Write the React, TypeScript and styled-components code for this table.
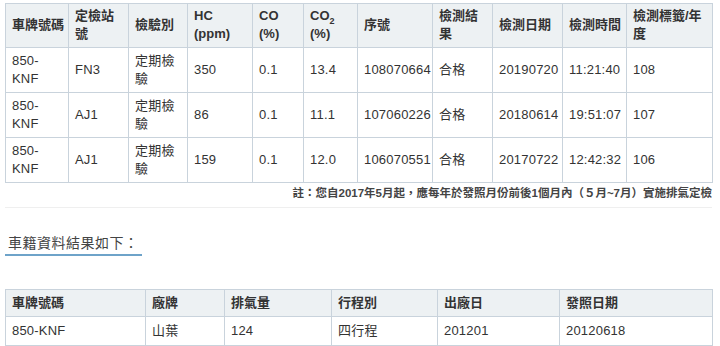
import styled, { createGlobalStyle } from 'styled-components'

const GlobalStyle = createGlobalStyle`
  body {
    margin: 0;
    background: #fff;
    font-family: "Liberation Sans", Arial, "Noto Sans CJK TC", sans-serif;
    color: #333;
  }
`

const inspections = [
  { plate: '850-KNF', station: 'FN3', kind: '定期檢驗', hc: '350', co: '0.1', co2: '13.4', serial: '108070664', result: '合格', date: '20190720', time: '11:21:40', label: '108' },
  { plate: '850-KNF', station: 'AJ1', kind: '定期檢驗', hc: '86', co: '0.1', co2: '11.1', serial: '107060226', result: '合格', date: '20180614', time: '19:51:07', label: '107' },
  { plate: '850-KNF', station: 'AJ1', kind: '定期檢驗', hc: '159', co: '0.1', co2: '12.0', serial: '106070551', result: '合格', date: '20170722', time: '12:42:32', label: '106' },
]

const inspectionCols = [63, 60, 59, 65, 51, 54, 75, 60, 70, 64, 86]
const vehicleCols = [140, 79, 107, 106, 122, 153]

function App() {
  return (
    <Wrapper>
      <GlobalStyle />
      <DataTable>
        <colgroup>
          {inspectionCols.map((w, i) => <Col key={i} $w={w} />)}
        </colgroup>
        <thead>
          <tr>
            <Th>車牌號碼</Th>
            <Th>定檢站號</Th>
            <Th>檢驗別</Th>
            <Th>HC (ppm)</Th>
            <Th>CO (%)</Th>
            <Th>CO<sub>2</sub> (%)</Th>
            <Th>序號</Th>
            <Th>檢測結果</Th>
            <Th>檢測日期</Th>
            <Th>檢測時間</Th>
            <Th>檢測標籤/年度</Th>
          </tr>
        </thead>
        <tbody>
          {inspections.map((r) => (
            <tr key={r.serial}>
              <Td>{r.plate}</Td>
              <Td>{r.station}</Td>
              <Td>{r.kind}</Td>
              <Td>{r.hc}</Td>
              <Td>{r.co}</Td>
              <Td>{r.co2}</Td>
              <Td>{r.serial}</Td>
              <Td>{r.result}</Td>
              <Td>{r.date}</Td>
              <Td>{r.time}</Td>
              <Td>{r.label}</Td>
            </tr>
          ))}
        </tbody>
      </DataTable>

      <Note>註：您自2017年5月起，應每年於發照月份前後1個月內（５月~7月）實施排氣定檢</Note>

      <SectionTitle>車籍資料結果如下：</SectionTitle>

      <DataTable $compact>
        <colgroup>
          {vehicleCols.map((w, i) => <Col key={i} $w={w} />)}
        </colgroup>
        <thead>
          <tr>
            <Th $compact>車牌號碼</Th>
            <Th $compact>廠牌</Th>
            <Th $compact>排氣量</Th>
            <Th $compact>行程別</Th>
            <Th $compact>出廠日</Th>
            <Th $compact>發照日期</Th>
          </tr>
        </thead>
        <tbody>
          <tr>
            <Td $compact>850-KNF</Td>
            <Td $compact>山葉</Td>
            <Td $compact>124</Td>
            <Td $compact>四行程</Td>
            <Td $compact>201201</Td>
            <Td $compact>20120618</Td>
          </tr>
        </tbody>
      </DataTable>
    </Wrapper>
  )
}

const Wrapper = styled.div`
  width: 707px;
  padding: 3px 0 0 5px;
  display: flex;
  flex-direction: column;
  align-items: flex-start;
`

const DataTable = styled.table<{ $compact?: boolean }>`
  width: 707px;
  table-layout: fixed;
  border-collapse: collapse;
  margin-top: ${(p) => (p.$compact ? '33px' : '0')};
  font-size: 13px;
  line-height: 18px;
`

const Col = styled.col<{ $w: number }>`
  width: ${(p) => p.$w}px;
`

const Th = styled.th<{ $compact?: boolean }>`
  background: #edf1f3;
  border: 1px solid #c9d3dc;
  padding: ${(p) => (p.$compact ? '4px 4px 4px 6px' : '3px 4px 4px 6px')};
  text-align: left;
  vertical-align: middle;
  font-weight: bold;
  color: #333;

  sub {
    font-size: 9px;
    line-height: 0;
  }
`

const Td = styled.td<{ $compact?: boolean }>`
  border: 1px solid #c9d3dc;
  padding: ${(p) => (p.$compact ? '5px 4px 5px 6px' : '4px 4px 4px 6px')};
  height: ${(p) => (p.$compact ? 'auto' : '36px')};
  vertical-align: middle;
  color: #333;
  letter-spacing: 0.2px;
`

const Note = styled.div`
  align-self: stretch;
  text-align: right;
  font-size: 11.5px;
  font-weight: bold;
  color: #444;
  line-height: 18px;
  padding: 1px 0 5px;
  border-bottom: 1px solid #efefef;
`

const SectionTitle = styled.h3`
  margin: 24px 0 0;
  padding: 0 3px;
  font-size: 14px;
  font-weight: normal;
  line-height: 22px;
  color: #444;
  letter-spacing: 0.5px;
  border-bottom: 2px solid #6ea3c9;
`

export default App
